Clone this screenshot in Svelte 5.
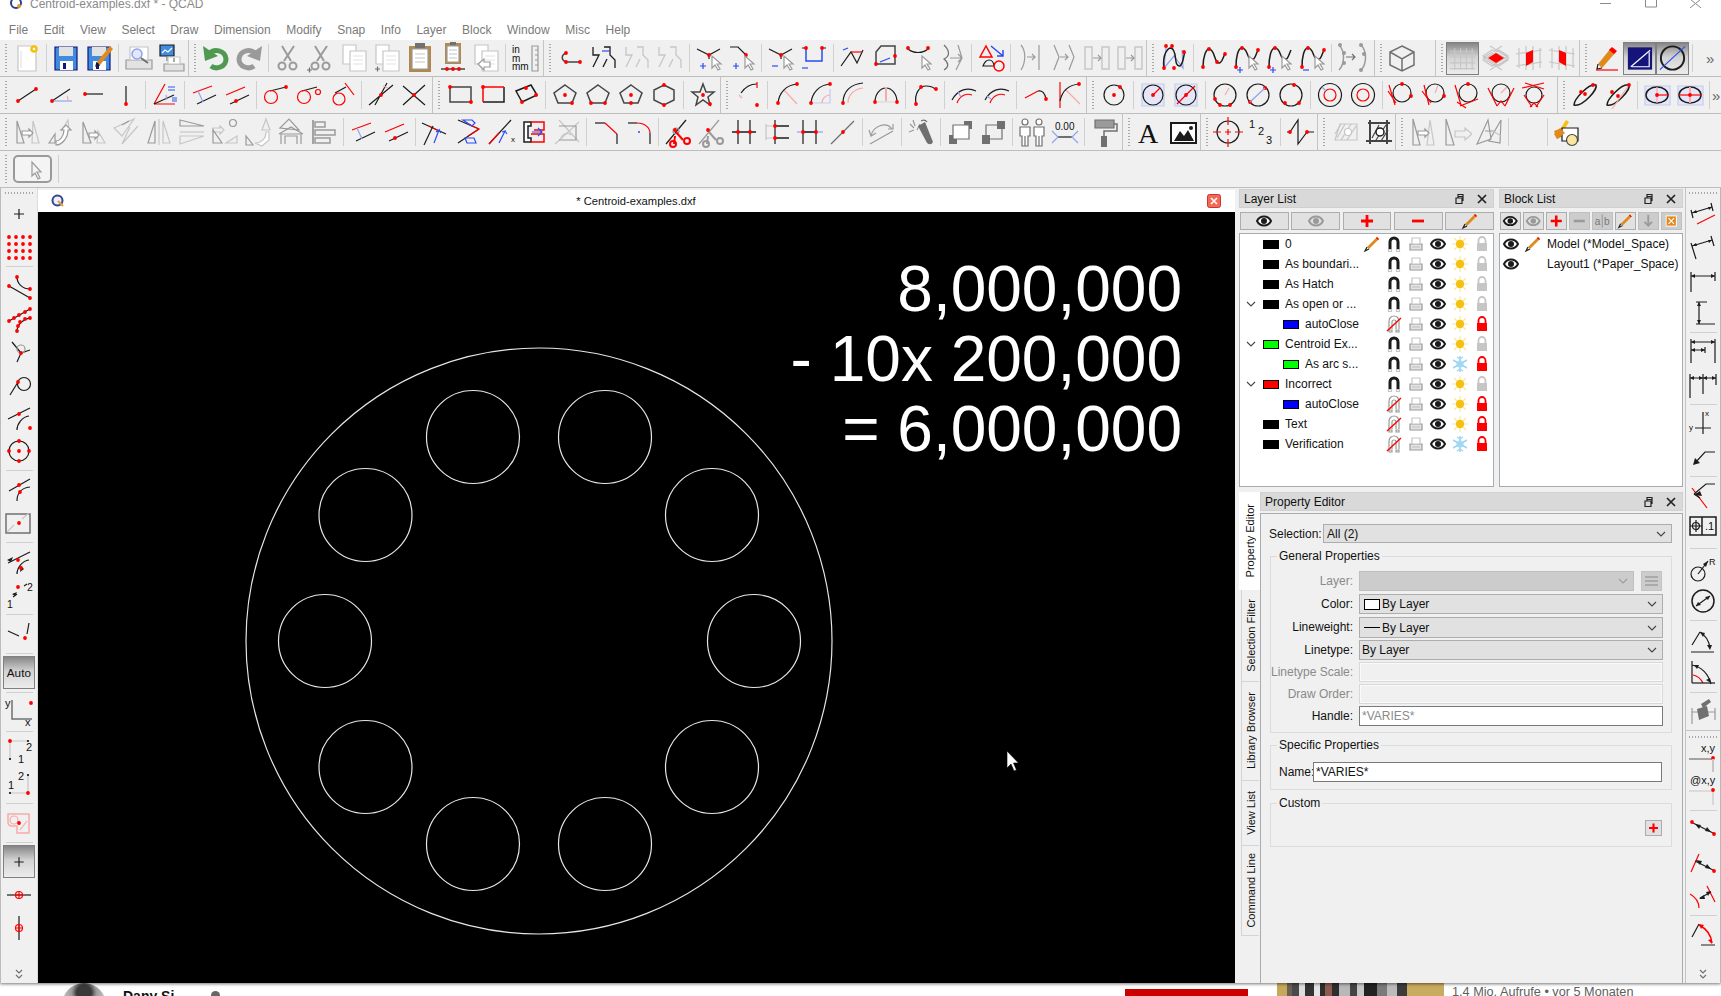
<script>
  const C = { k:'#1c1c1c', K:'#444', r:'#f00', R:'#e55', b:'#2a4cf0', B:'#8ea4ee', g:'#9a9a9a', G:'#707070', l:'#c6c6c6', p:'#f6aaaa', w:'#fff', n:'none', y:'#f6c10e', Y:'#fbe6a0', o:'#e08a1e', d:'#14147a', s:'#e2e2e2', t:'#b08850', e:'#4f9a50', F:'#3f8be0', i:'#e4e7f8', h:'#c3ccf0', c:'#9bd6f2', m:'#d8d8d8' };
  const cache = new Map();
  function P(src) {
    if (cache.has(src)) return cache.get(src);
    const out = src.split(';').filter(Boolean).map((part) => {
      const i = part.indexOf(':');
      const h = part.slice(0, i), b = part.slice(i + 1);
      if (h === '.' || h === ',') {
        const n = b.trim().split(/\s+/).map(Number), pts = [];
        for (let j = 0; j < n.length; j += 2) pts.push([n[j], n[j + 1]]);
        return { t: 'dots', pts, fill: h === '.' ? '#f00' : '#111', r: h === '.' ? 1.9 : 1.1 };
      }
      if (h === 'T' || h === 'U' || h === 'V') {
        const a = b.split(' ');
        return { t: 'text', x: a[0], y: a[1], size: a[2], text: a.slice(3).join(' '), fill: h === 'U' ? '#777' : '#111', fam: h === 'V' ? 'Liberation Serif' : 'Liberation Sans' };
      }
      const m = h.match(/^([a-zA-Z])([a-zA-Z])?([\d.]+)?$/);
      const d = b.replace(/O(-?[\d.]+) (-?[\d.]+) ([\d.]+)/g, (_, x, y, r) => `M${x - r} ${y}a${r} ${r} 0 1 0 ${2 * r} 0a${r} ${r} 0 1 0 ${-2 * r} 0`);
      return { t: 'path', d, stroke: C[m[1]], fill: m[2] ? C[m[2]] : 'none', w: m[3] || 1.2 };
    });
    cache.set(src, out);
    return out;
  }

  const cur = 'gw:M19 14V26L22 23L25 28L27 27L24 22L28 22z;';
  const floppy = 'dF1.2:M5 5h22v23H5z;ns:M9 5h14v9H9z;nw:M10 19h13v9H10z;nd:M13 21h3v6h-3z;';
  const scis = 'g2:M22 4L12 19M10 4L19 19;g2:O10 24 3.5;g2:O21 24 3.5;';
  const copy = 'lw:M5 3h13v19H5z;lw:M12 9h16v20H12z;s:M15 14h10M15 18h10M15 22h10;';
  const par1 = 'r:M5 14L24 7;k:M9 25L28 16;B:M10 12L15 23';
  const par2 = 'r:M5 16L24 8;k:M9 25L28 16;.:15 22';
  const sShape = (c) => `${c}1.3:M5 5V13H11L5 25M16 5H22V13L27 18V26M19 17L15 25;`;

  const row1 = [
    { w: 189, items: ['lw:M7 4h18v25H7z;y2.5:O23 7 2.5;s:M10 9V26', '|', floppy, floppy + 'no:M14 20L27 4l3 3L17 23z;k:M14 20l-1 4 4-1', '|',
      'gs:M4 18h26v9H4z;lw:M8 5h18v13H8z;Bi1.5:O15 12 5;G2:M19 16l7 5', 'kF:M5 3h14v11H5z;w:M7 11l3-3 3 2 4-4;G:M12 14V19;gs:M9 22h20v7H9z;lw:M13 15h12v7H13z;G:M19 16v4'] },
    { w: 355, items: ['e5:M9 12C14 6 25 8 26 17C26 25 16 28 11 24;ne:M3 4L5 19L18 14z', 'g5:M23 12C18 6 7 8 6 17C6 25 16 28 21 24;ng:M29 4L27 19L14 14z', '|',
      scis, scis + 'G:M2 28h5M4.5 25.5v5', copy, copy + 'G:M4 27h5M6.5 24.5v5',
      'nt:M5 4h22v26H5z;gw:M8 7h16v20H8z;nG:M11 1h10v5H11z;l:M11 12h10M11 16h10M11 20h10', 'nt:M8 1h16v21H8z;gw:M10 4h12v16H10z;nG:M13 0h6v3h-6z;l:M12 8h8M12 12h8M12 16h8;k:M4 27H28;.:10 27 16 27 22 27',
      copy + 'gw:M8 22l6-5v3h6v5h-6v3z', '|', 'T:3 11 10 in;T:3 20 10 m;T:3 28 10 mm;g:M23 4h6v25h-6z;g:M26 8h3M26 13h3M26 18h3M26 23h3'] },
    { w: 603, items: ['K1.5:M11 11C6 13 6 18 11 20H25;.:11 11 11 20 25 20', sShape('k') + 'b:M14 9H22', sShape('l'), sShape('l'), '|',
      'k:M4 7L16 13L27 7M16 13V17;.:16 13;b:M7 24H13M10 21V27;' + cur, 'k:M4 5H12L20 13;.:20 13;b:M7 24H13M10 21V27;' + cur, '|',
      'k:M4 7L16 13L27 7M16 13V17;.:16 13;b:M7 24H13;' + cur, 'k:M4 6H8M24 6H28;b1.5:M8 6V19H24V6;.:8 6 24 6;b:M4 26H10', '|',
      'k:M4 24L14 10L20 21L26 8;r:M14 10H25;b:M6 8l5-2', 'K1.5:M6 10L11 4H25V22H6z;.:6 22 25 14;b:M10 20L20 16', 'k:M4 6C10 12 20 12 26 6;.:5 6 25 6;' + cur, 'G:M8 3C14 9 14 14 8 17C13 21 13 25 8 28;g:M14 16H26M22 12l4 4-4 4M22 3L26 16L20 28', '|',
      'r1.5:M5 15L11 4L17 15z;b1.5:M16 4L28 14M22 14h6V8;k:M8 24C11 16 18 16 19 24z;r1.5:O24 24 5', '|',
      'g:M7 3C12 9 12 20 7 28;g:M13 15H21M18 12l3 3-3 3;g:M25 3V28', 'g:M7 3L12 15L7 28;g:M13 15H21M18 12l3 3-3 3;g:M22 3L27 15L22 28', 'l1.5:M5 5h7v22H5z;l1.5:M22 5h7v22H22z;g:M13 16H21M18 13l3 3-3 3', 'l1.5:M5 5h7v22H5z;l1.5:M22 5h7v22H22z;g:M13 16H21M18 13l3 3-3 3'] },
    { w: 228, items: ['B:M8 6L6 26L16 14L25 26L24 8;k1.5:M6 26C4 12 10 6 13 6C20 8 15 25 22 24C26 20 25 14 27 10;.:8 4 14 4 6 26 16 26 26 10', '|',
      'k1.5:M6 25C6 15 9 7 12 7C18 7 17 21 22 21C25 21 26 15 28 12;.:6 25 12 7 20 20 28 12', 'k1.5:M6 25C6 15 8 6 12 6C18 6 17 18 22 18C25 18 26 12 28 8;.:6 25 12 6 22 18 28 8;b:M7 28H13M10 25V31;' + cur, 'k1.5:M6 25C6 15 8 6 12 6C18 6 17 18 22 18C25 18 26 12 28 8;.:6 25 12 6 22 18;b:M7 28H13M10 25V31;' + cur, 'k1.5:M6 25C6 15 8 6 12 6C18 6 17 18 22 18C25 18 26 12 28 8;.:6 25 12 6 22 18 28 8;b:M7 28H13;' + cur, '|',
      'g1.5:M4 3C10 9 10 22 4 28;g1.5:M26 3C32 9 32 22 26 28;G:M11 15H20M17 12l3 3-3 3;ng:O5 3 2;ng:O9 11 2;ng:O9 21 2;ng:O26 3 2;ng:O29 12 2;ng:O26 28 2'] },
    { w: 61, items: ['G1.5:M16 4L28 10V23L16 29L4 23V10zM4 10L16 17L28 10M16 17V29'] },
    { w: 144, items: ['!l:M8 6V28M14 6V28M20 6V28M26 6V28M3 9H29M3 15H29M3 21H29M3 27H29', 'l:M3 14L12 8L28 18L19 24zM3 18L12 24L28 14L19 8zM10 4L29 16M22 4L3 16M10 28L29 16M22 28L3 16;nr:M16 11L24 16L16 21L8 16z', 'l:M6 6V26M13 4V28M20 4V28M27 6V26M3 12L29 8M3 24L29 20;nr:M13 11L20 8V20L13 24z', 'l:M6 6V26M13 4V28M20 4V28M27 6V26M3 8L29 12M3 20L29 24;nr:M13 8L20 11V24L13 20z'] },
    { items: ['no:M7 22L20 6l5 4L11 26z;nr:M18 8l3-3 5 4-3 3z;k:M7 22l-1 5 5-1;r:M5 28H27', '!nd:M4 5h25v23H4z;w:M7 25L27 8;w:M8 25H26V10', '!k2:O16 16 12;b:M3 28L29 4', '|', '>>'] }
  ];
  const row2 = [
    { w: 433, items: ['k:M7 22L25 10;.:7 22 25 10', 'k:M8 22L26 10;B:M8 22H28;p:M23 17a6 6 0 0 1 1 5;.:8 22', 'k:M8 15H26;.:8 15', 'k:M16 7V25;.:16 25', '|',
      'r:M5 25L16 5M5 25H26;k:M5 25L25 16;B:M17 21a8 8 0 0 0 0-5;nB:M19 7h7v2h-7zM19 10h7v2h-7zM23 18h5v5h-5z', '|', par1, par2, '|',
      'k:M10 12L26 8;r1.2:O11 18 6.5;.:26 8', 'k:M9 12L24 8;r1.2:O11 18 6.5;r:O25 13 2.5', 'k:M9 14L20 8;r1.2:O13 20 6;r:M19 4L28 16', '|',
      'k:M4 26L28 6M10 26L22 4;p:M18 7l5 2;.:16 16', 'k:M5 26L27 6M5 7L27 26;.:16 16'] },
    { w: 288, items: ['K1.5:M6 8H27V23H6z;.:6 8 27 23', 'k1.5:M27 8V23H6;r1.5:M6 23V8H27;.:6 8', 'k1.5:M12 23L6 12L21 6L27 16z;.:16 9 12 23 26 16', '|',
      'K1.5:M16 6L27 14L23 24H9L5 14z;.:16 16 23 24', 'K1.5:M16 6L27 14L23 24H9L5 14z;.:9 24 23 24', 'K1.5:M16 6L27 14L23 24H9L5 14z;.:16 16 16 24', 'K1.5:M16 6L26 11V21L16 26L6 21V11z;.:16 6 16 26', '|',
      'K1.5:M16 5l3 8h8l-6 5 2 8-7-5-7 5 2-8-6-5h8z;.:16 16 23 25'] },
    { w: 366, items: ['k:M9 14C13 8 19 5 25 5;r:M25 3V9;p:M7 16L10 19;.:25 26', '|',
      'p:M13 11L26 25;k:M7 24C8 14 15 6 26 5;.:7 24 26 5', 'h:M7 24H26V10;p:M18 24a8 8 0 0 1 8-8;k:M7 24C8 14 15 6 26 5;.:7 24 26 5', 'k:M6 24C6 12 14 5 26 4;p:M11 24C11 15 18 10 26 9;.:6 24', 'k:M5 23A11 14 0 0 1 27 23;p2:M16 8V22;m:M7 23H25;.:5 23 27 23', '|',
      'k:M7 25C5 14 11 7 17 7C21 7 24 8 26 10;.:7 25 12 8 27 10', '|',
      'k:M4 21C10 10 20 8 28 12;r:M9 24C12 16 19 14 24 16;B:M10 13l3 5', 'k:M4 21C10 10 20 8 28 12;r:M9 24C12 16 19 14 24 16;B:M6 17l4 3', '|',
      'r:M5 19L18 12;k:M18 12C22 11 25 14 26 20;.:26 20', 'r:M7 3V29;p:M12 10L27 25;k:M7 22C9 12 16 6 26 5;.:26 5'] },
    { w: 471, items: ['k:O16 16 10;.:16 16 22 8', '|',
      'hi:M5 5h22v22H5z;k:O16 16 10;r:M16 16L23 9;.:16 16', 'hi:M5 5h22v22H5z;k:O16 16 10;r:M7 25L25 7;.:16 16', '|',
      'k:O16 16 11;.:6 20 11 26 21 26;p:M16 16L20 9', 'k:O16 16 11;.:23 9 8 23;B:M8 23L23 9', 'k:O16 16 11;.:19 6 10 24 24 24', '|',
      'k:O16 16 11.5;r:O16 16 6;B:M8 8l4 4', 'k:O16 16 11.5;r:O16 16 6', '|',
      'k:O16 14 9;r:M3 6L9 26M2 12L10 24;.:16 5 25 17', 'k:O16 14 9;r:M5 6L10 26M3 12L12 24;p:M16 14L19 6;.:25 17', 'k:O16 14 9;r:M3 6L9 26M5 23L14 29M8 27L26 20;.:16 5', 'k:O16 14 9;r:M3 9L12 27M29 9L20 27M12 27L16 22L20 27;p:M16 14L22 8', 'k:O16 16 8;r:M4 9L26 4M7 4L26 10M6 16L14 28M26 16L18 28M12 28L16 24L20 28'] },
    { items: ['k1.5:M5 26C5 20 20 4 27 6C29 10 14 28 5 26z;.:24 6 12 13 16 15', 'k1.5:M5 26C5 20 20 4 27 6C29 10 14 28 5 26z;p:M10 30L27 6;.:27 6 10 13 16 17', '|',
      'hi:M4 7h25v19H4z;k1.5:M5 16a11 8 0 1 0 22 0a11 8 0 1 0 -22 0;r:M16 16H28;p:M16 8V24;.:16 16', 'hi:M4 7h25v19H4z;k1.5:M5 16a11 8 0 1 0 22 0a11 8 0 1 0 -22 0;r:M5 16H28;p2:M16 8V24;.:16 16', '|', '>>'] }
  ];
  const m1 = 'g:M6 5V27H13z;l:M22 5L28 27H21z;gw:M11 15h7v-2l4 4-4 4v-2h-7z';
  const row3 = [
    { w: 1123, items: [m1, 'g:M5 27L11 18V27z;l:M24 4L18 14H25z;gw:M12 25C16 25 20 20 20 14h-3l5-5 5 5h-3C24 22 18 29 12 29z', 'g:M6 6V27H14z;l:M21 15L28 27H20z;gw:M12 17h6v-2l4 4-4 4v-2h-6z', 'l:M4 12L24 3L12 20zM28 10L12 28L20 11;g:M12 9L19 5', 'g:M5 27L12 5V27z;l:M20 5L27 27H20z;l:M16 3V29', 'g:M4 4L28 10H4z;l:M4 28L28 20H4z;l:M4 16H28', 'l:M4 12h7v-2l4 4-4 4v-2H4z;g:O24 7 3.5;g:M4 14V27H13z;l:M28 20V27H17z', 'g:M4 20V29H11z;l:M24 3L20 14H28z;lw:M13 27C19 27 24 23 24 16h3v8L20 30z', 'g:M6 28V18H26V28M4 18L16 11L28 18M10 28V20H22V28;g:M5 12L14 3L24 14z', 'G:M5 4V28;g1.5:M7 6h10v5H7zM7 14h20v5H7zM7 22h15v5H7z', '|', par1, par2, '|',
      'k:M3 7L27 18;r:M10 10L20 15;k:M5 29L14 10;b:M15 27L20 14l-3 2M20 14l2 3', 'k:M6 4L27 13M6 27L27 13;r:M16 20L27 13L16 8;b:M11 4H20l3 3-3 3zM13 22H22l2 5H15z', 'k:M4 28L26 4;r:M4 28L14 17;b:M14 27L20 15l-3 1M20 15l2 3;T:26 26 8 x', 'kw1.5:M13 6H6V26H13V22H10V10H13z;r1.5:M13 6H26V14H16M13 18H26V26H13;b:M14 16H24M20 12l4 4-4 4', 'l:M4 28L28 6M8 4L28 26;g:M8 10h17v14H8;l:M10 24a6 6 0 0 1 10-5', '|',
      'k:M5 7H15;r:M15 7L27 18;k:M27 18V28', 'k:M5 7H14;r:M14 7C22 7 27 12 27 17;k:M27 17V28;nb:O16 16 1', '|',
      'k:M4 28L24 4;g:O14 15 3;r2:M14 16L21 24M13 20L12 28;r2:O25 25 3;r2:O11 28 3;.:13 14', 'g:M4 28L24 4;g2:M14 16L21 24M13 20L12 28;g2:O25 25 3;g2:O11 28 3;.:13 14', 'k:M10 4V28M22 4V28;k1.5:M4 16H28;.:10 16 22 16', 'k:M14 4V28;k1.5:M14 10H28M14 22H28;l:M5 10H14M5 22H14M5 8V24;.:14 10 14 22', 'B:M3 16H29;k:M9 4V28M22 4V28;k1.5:M9 16H22;.:9 16 22 16', 'G:M4 28L27 5;.:16 16', '|',
      'g:M4 28L27 15;g:M5 20C7 10 20 5 26 13M3 14l2 6 5-3M22 13h5v-5', '|', 'g:M5 8l4 4M4 16l5-2M8 4l2 6M15 8l-3 6;nG:M13 10L20 6L28 26Q26 30 22 27z;G:M16 5Q20 3 22 6', '|',
      'nG:M5 19h8v9H5z;nG:M20 5h8v8h-8z;Gw:M9 9h16v14H9z', 'nG:M5 19h8v9H5z;nG:M20 5h8v8h-8z;G:M9 9h16v14H9z', '|',
      'Gw:O9 6 3;Gw:M4 11h10v9h-2V30H6V20H4z;G:M9 20V30;Gw:O23 6 3;Gw:M18 11h10v9h-2V30H20V20h-2z;G:M23 20V30', 'T:6 14 10 0.00;K1.5:M9 21H23;B:M3 15L9 21L3 27M29 15L23 21L29 27', '|',
      'Gg:M7 4h19v8H7z;G1.5:M26 8h3V15H16V20;nG:M13 20h6v11h-6z'] },
    { w: 78, items: ['V:4 27 28 A', 'kw2:M4 7h25v20H4z;nk:M7 25L13 15L17 20L21 14L27 25z;nk:O24 12 2'] },
    { w: 117, items: ['k:O16 16 11;r:M1 16H9M13 16H19M23 16H31M16 1V9M16 13V19M16 23V31', 'T:4 12 11 1;T:13 19 11 2;T:21 28 11 3', '|', 'k:M3 16H6M6 16L14 4L14 28L23 16H30;.:6 16 23 16'] },
    { w: 78, items: ['l:M6 24L11 8H28V24z;l:M8 22L16 8M12 24L22 8M18 24L27 10M6 18L12 8;nw:O19 16 3.5;l:O19 16 3.5', 'K2:M6 7H28M4 25H30M8 4V28M25 4V28;K:M10 22L17 9M14 24L24 9M19 25L26 14;kw1.5:O18 16 4'] },
    { items: ['g:M6 3V29H13z;l:M23 4L27 29H20z;gw:M11 15h7v-2l4 4-4 4v-2h-7z', 'g:M6 3V29H14z;l:M15 15H25V12L32 18L25 24V21H15z', 'g:M4 28L15 4L18 23zM16 25L28 4L27 27zM12 15H22;l:M20 15L28 20', '|', 'n:M0 0', '|',
      'ny:M15 4l3 2-5 8-3-2z;no:M3 15l8-3 5 6-10 5z;kw:M11 12h16v13H11z;KY:O21 24 5.5;no:M3 18l6-6 5 5-8 6z'] }
  ];

  const left = ['k:M11 16H21M16 11V21',
    '.:6 6 13 6 20 6 27 6 6 13 13 13 20 13 27 13 6 20 13 20 20 20 27 20 6 27 13 27 20 27 27 27', '|',
    'k:M6 16L27 28;k:M14 7C14 14 20 19 27 19;.:6 16 27 28 14 7 27 19',
    'k:M6 18L27 6M14 28C14 22 20 16 27 15;.:6 18 11 15 16 12 22 9 27 6 14 28 15 23 17 19 22 16 27 15',
    'k:M9 6L18 17L27 14M18 17L14 26;g:O18 13 4;.:18 17',
    'k:M7 26L15 13;k:O21 15 6.5;.:15 13',
    'k:M5 17L27 6M14 28C14 22 19 15 26 14;.:16 12 27 26',
    'k:O16 16 10;.:16 16 16 6 16 26 6 16 26 16', '|',
    'k:M6 17L27 5M14 27C14 20 18 14 27 13;.:16 11 17 18',
    'G1.5:M3 7H27V26H3z;l:M4 25L11 18M19 12L26 6;.:16 16', '|',
    'k:M5 17L27 6M14 28C14 22 19 15 26 14;nk:M4 14l6-3-2 5zM17 26l1-6 3 3z;.:15 14 18 22',
    'T:4 29 10.5 1;T:24 12 10.5 2;k:M10 18L14 15M21 7L24 5;.:15 8;nk:M9 15l5-2-2 4z', '|',
    'k:M5 13L16 18M26 5L24 16;.:22 20', '|',
    '!T:3 20 12.5 Auto', '|',
    'T:2 11 11 y;T:22 30 11 x;G1.5:M9 4V23H29;.:28 7', '|',
    'T:15 28 11 1;T:23 16 11 2;l:M7 6H25M7 6V24;.:7 6;,:7 24 25 6',
    'T:5 21 11 1;T:15 12 11 2;l:M7 25H25M25 7V25;.:25 25;,:7 25 25 7', '|',
    'p1.5:M5 7H26V26H14V19H9C6 19 5 17 5 15z;p:O11 13 4;p:M17 23L24 14;.:16 16', '|',
    '!k:M11 16H21M16 11V21',
    'k:M4 16H28;r:O16 16 3.5;r:M16 12V20M12 16H20',
    'k:M16 4V28;r:O16 16 3.5;r:M16 12V20M12 16H20'];
  const dimH = 'k:M4 12H28M4 8V28M28 8V17;nk:M4 12l4-2v4zM28 12l-4-2v4z';
  const right1 = ['k:M5 14L25 8M4 11L6 19M24 4L26 12;r:M10 25L28 16;nk:M5 14l4-3 1 3zM25 8l-4 0 1 3z',
    'k:M5 14L25 8M4 11L9 27M24 4L27 14;nk:M5 14l4-3 1 3zM25 8l-4 0 1 3z', dimH, 'k:M9 5H20M9 27H28M12 5V27;nk:M12 5l-2 4h4zM12 27l-2-4h4z', '|',
    'k:M4 6H28M4 14H18M4 3V27M28 3V27M18 11V17;nk:M4 6l4-2v4zM28 6l-4-2v4zM4 14l4-2v4zM18 14l-4-2v4z', 'k:M3 9H29M3 5V29M16 5V25M29 5V16;nk:M3 9l4-2v4zM16 9l4-2v4zM16 9l-4-2v4zM29 9l-4-2v4z', '|',
    'T:18 8 8 x;T:2 22 8 y;k:M16 4V26M8 20H24', 'k:M8 22L18 11H28;nk:M6 24l2-7 5 5z', '|',
    'r:M5 8L20 28;k:M7 14L19 4H28M13 18l-6-4;nk:M7 15l6-4 2 5z',
    'k1.5:M3 4H29V22H3zM15 4V22;T:18 17 11 .1;k1.2:O9 13 3.5;k:M9 7V19M3 13H15', '|',
    'k:O11 22 7;k:M11 22L21 9;nk:M21 9l-5 3 3 3z;T:22 13 9 R', 'k1.5:O16 16 11;k:M9 21L23 11;nk:M9 21l2-4 3 3zM23 11l-2 4-3-3z', '|',
    'k:M4 28H27M5 21L13 8M13 8C18 11 22 17 23 24;nk:M13 8l5 1-2 4zM23 26l-3-5h5z', 'k:M5 4V26M5 8C14 10 21 16 24 27;r:M6 18C11 19 14 22 16 26;k:M5 26H28;nk:M7 8l5 0-2 4zM24 26l-5-3 4-2z', '|',
    'g:M5 12V28M28 12V24M5 16H28;nG:M14 8L22 3L24 6L16 12zM10 13L20 10L22 20L12 24z'];
  const right2 = ['T:14 10 11 x,y;G:M2 17H26;.:26 16;l2:M26 17V30', 'T:3 9 11 @x,y;l:M2 16H26M26 16V30;.:26 15', '|',
    'k:M4 8L28 20;nk:M8 10l6 1-2 4zM24 18l-6-1 2-4z;.:5 8 27 20', 'r:M4 25L12 7;k:M8 14L28 24;nk:M9 13l6 1-2 4zM24 22l-6-1 2-4z;.:27 24', 'r:M3 14C10 18 12 22 12 28M20 6L28 22;k:M13 18L24 12;nk:M12 19l5-4 1 4zM24 11l-5 1 2 4z', '|',
    'K:M14 26H28;k:M5 18L12 5;r1.5:M12 6C20 10 24 16 25 24;nr:M12 5l5 1-3 4zM25 25l-4-4 4-1z'];
  const tabs = ['Property Editor', 'Selection Filter', 'Library Browser', 'View List', 'Command Line'];
  const eye = 'kw2:M3 10C6 4 14 4 17 10C14 16 6 16 3 10z;nk:O10 10 3';
  const eyeOff = 'gs2:M3 10C6 4 14 4 17 10C14 16 6 16 3 10z;ng:O10 10 3';
  const pencil = 'no:M5 13L15 3l2 2L7 15z;nr:M14 4l1-1 2 2-1 1z;k:M5 13l-2 4 4-2';
  const plus = 'r2.8:M10 4V16M4 10H16';
  const minus = 'r2.8:M4 10H16';
  const magnet = 'k3:M6 15V8a4 4 0 0 1 8 0V15;l:M4.5 15.5h3v2h-3zM12.5 15.5h3v2h-3z';
  const noMagnet = 'g:M5 15V7a5 5 0 0 1 10 0V15M8 15V8a2 2 0 0 1 4 0V15;g:M5 16h3v2H5zM12 16h3v2h-3z;r1.4:M3 17L17 4';
  const printer = 'gs:M4 10h12v6H4z;lw:M6 4h8v6H6z;l:M6 13h8';
  const sun = 'Y1.2:M10 2V18M2 10H18M4 4L16 16M4 16L16 4;ny:O10 10 4.2';
  const snow = 'c1.6:M10 2V18M3 6L17 14M3 14L17 6;c:O10 10 3;c:M7 3l3 2 3-2M7 17l3-2 3 2';
  const lock = (c) => `${c}1.8:M6.5 9V6.5a3.5 3.5 0 0 1 7 0V9;n${c}:M5 9h10v8H5z`;
  const layers = [
    { n: '0', c: '#000', pen: 1 }, { n: 'As boundari...', c: '#000' }, { n: 'As Hatch', c: '#000' }, { n: 'As open or ...', c: '#000', chev: 1 },
    { n: 'autoClose', c: '#00f', sub: 1, off: 1, red: 1 }, { n: 'Centroid Ex...', c: '#0f0', chev: 1 }, { n: 'As arc s...', c: '#0f0', sub: 1, frz: 1, red: 1 },
    { n: 'Incorrect', c: '#f00', chev: 1 }, { n: 'autoClose', c: '#00f', sub: 1, off: 1, red: 1 }, { n: 'Text', c: '#000', off: 1, red: 1 }, { n: 'Verification', c: '#000', off: 1, frz: 1, red: 1 }
  ];
  const blockBtns = [[eye, 0], [eyeOff, 0], [plus, 0], ['g2.8:M4 10H16', 1], ['U:2 14 11 a;g:M10 3V17;U:12 14 11 b', 1], [pencil, 0], ['g2:M10 3V15;g2:M6 11l4 4 4-4;l:M7 3h6', 1], ['nw:M4 4h12v12H4z;no:M5 5h10v10H5z;w:M7 7l6 6M13 7l-6 6', 1]];
  const holes = [[473, 437], [605, 437], [712, 515], [754, 641], [712, 767], [605, 844], [473, 844], [365.5, 767], [325, 641], [365.5, 515]];
  const bigText = [['8,000,000', 311], ['- 10x 200,000', 381], ['= 6,000,000', 451]];
</script>

{#snippet ic(src, size = 32)}
  <svg class="ic" width={size} height={size} viewBox="0 0 {size} {size}">
    {#each P(src) as s}
      {#if s.t === 'path'}
        <path d={s.d} stroke={s.stroke} fill={s.fill} stroke-width={s.w}></path>
      {:else if s.t === 'dots'}
        {#each s.pts as p}<circle cx={p[0]} cy={p[1]} r={s.r} fill={s.fill}></circle>{/each}
      {:else}
        <text x={s.x} y={s.y} font-size={s.size} fill={s.fill} font-family={s.fam}>{s.text}</text>
      {/if}
    {/each}
  </svg>
{/snippet}

{#snippet hbar(row)}
  <div class="row">
    {#each row as tb}
      <div class="tb" class:grow={!tb.w} style:width={tb.w ? tb.w + 'px' : null}>
        <i class="handle"></i>
        {#each tb.items as it}
          {#if it === '|'}<i class="sep"></i>
          {:else if it === '>>'}<span class="more">»</span>
          {:else}<span class="tool" class:on={it[0] === '!'}>{@render ic(it[0] === '!' ? it.slice(1) : it)}</span>{/if}
        {/each}
      </div>
    {/each}
  </div>
{/snippet}

{#snippet vlist(list)}
  {#each list as it}
    {#if it === '|'}<i class="vsep"></i>
    {:else}<span class="vtool" class:on={it[0] === '!'}>{@render ic(it[0] === '!' ? it.slice(1) : it)}</span>{/if}
  {/each}
{/snippet}

{#snippet dockTitle(text)}
  <div class="dtitle">
    <span>{text}</span>
    <svg class="dbtns" width="34" height="12" viewBox="0 0 34 12"><path d="M3 3.5h5v-2h-5zM1 5h6v5.5H1zM3 2v3M7 3.5h1v4H7" fill="none" stroke="#222" stroke-width="1.2"></path><path d="M23 2l8 8M31 2l-8 8" stroke="#222" stroke-width="1.7"></path></svg>
  </div>
{/snippet}

{#snippet chev()}
  <svg class="chev" width="10" height="6" viewBox="0 0 10 6"><path d="M1 1l4 4 4-4" fill="none" stroke="#444" stroke-width="1.1"></path></svg>
{/snippet}

<div class="page">
  <div class="appwin">
    <div class="titlebar">
      <svg class="appicon" width="14" height="12" viewBox="0 0 14 12"><circle cx="6" cy="3" r="5" fill="#fff" stroke="#2c3f8c" stroke-width="2"></circle><circle cx="9" cy="6" r="2" fill="#e0a030"></circle></svg>
      <span class="apptitle">Centroid-examples.dxf * - QCAD</span>
      <svg class="winctl" width="101" height="8" viewBox="0 0 101 8"><path d="M0 3.5H11M45.500-2h11v9h-11zM90-1l11 9M101-1l-11 9" fill="none" stroke="#8a8a8a" stroke-width="1"></path></svg>
    </div>
    <div class="menubar">
      {#each ['File', 'Edit', 'View', 'Select', 'Draw', 'Dimension', 'Modify', 'Snap', 'Info', 'Layer', 'Block', 'Window', 'Misc', 'Help'] as m}<span>{m}</span>{/each}
    </div>
    {@render hbar(row1)}
    {@render hbar(row2)}
    {@render hbar(row3)}
    <div class="row">
      <div class="tb grow">
        <i class="handle"></i>
        <span class="pick">{@render ic('g:M12 6V20L15 17L18 23L20 22L17 16L21 16z', 26)}</span>
        <i class="sep2"></i>
      </div>
    </div>

    <div class="main">
      <aside class="lbar">
        <i class="vhandle"></i>
        {@render vlist(left)}
        <span class="vmore">{@render ic('G:M13 10l3 3 3-3M13 15l3 3 3-3')}</span>
      </aside>

      <section class="doc">
        <header class="doctitle">
          <svg class="docicon" width="14" height="14" viewBox="0 0 14 14"><circle cx="6.500" cy="6.500" r="5" fill="#eef" stroke="#34468f" stroke-width="2"></circle><path d="M7 7l5 5" stroke="#e0a030" stroke-width="2"></path></svg>
          <span class="docname">* Centroid-examples.dxf</span>
          <svg class="docclose" width="14" height="14" viewBox="0 0 14 14"><rect x=".5" y=".5" width="13" height="13" rx="2" fill="#f26a55" stroke="#c33"></rect><path d="M4 4l6 6M10 4l-6 6" stroke="#fff" stroke-width="1.6"></path></svg>
        </header>
        <svg class="canvas" viewBox="38 212 1197 771" width="1197" height="771">
          <rect x="38" y="212" width="1197" height="771" fill="#000"></rect>
          <circle cx="539" cy="641" r="293" fill="none" stroke="#e6e6e6" stroke-width="1.2"></circle>
          {#each holes as h}<circle cx={h[0]} cy={h[1]} r="46.500" fill="none" stroke="#e6e6e6" stroke-width="1.2"></circle>{/each}
          {#each bigText as t}<text x="1182" y={t[1]} text-anchor="end" font-family="Liberation Sans" font-size="64" fill="#fff">{t[0]}</text>{/each}
          <path d="M1007 751v17l4-4 3 7 2.500-1-3-7h5z" fill="#fff" stroke="#000" stroke-width=".6"></path>
        </svg>
      </section>

      <section class="dock">
        <div class="dtop">
          <div class="dcol layercol">
            {@render dockTitle('Layer List')}
            <div class="lbtns">
              {#each [eye, eyeOff, plus, minus, pencil] as b}<span class="lbtn">{@render ic(b, 20)}</span>{/each}
            </div>
            <div class="listbox">
              {#each layers as l}
                <div class="lrow">
                  <span class="lchev">{#if l.chev}{@render chev()}{/if}</span>
                  <span class="lname" class:sub={l.sub}><i class="swatch" style:background={l.c}></i>{l.n}</span>
                  <span class="lic">{#if l.pen}{@render ic(pencil, 20)}{/if}</span>
                  <span class="lic">{@render ic(l.off ? noMagnet : magnet, 20)}</span>
                  <span class="lic">{@render ic(printer, 20)}</span>
                  <span class="lic">{@render ic(eye, 20)}</span>
                  <span class="lic">{@render ic(l.frz ? snow : sun, 20)}</span>
                  <span class="lic">{@render ic(lock(l.red ? 'r' : 'l'), 20)}</span>
                </div>
              {/each}
            </div>
          </div>
          <div class="dcol blockcol">
            {@render dockTitle('Block List')}
            <div class="bbtns">
              {#each blockBtns as b}<span class="bbtn" class:dis={b[1]}>{@render ic(b[0], 20)}</span>{/each}
            </div>
            <div class="listbox">
              <div class="brow"><span class="lic">{@render ic(eye, 20)}</span><span class="lic">{@render ic(pencil, 20)}</span><span>Model (*Model_Space)</span></div>
              <div class="brow"><span class="lic">{@render ic(eye, 20)}</span><span class="lic"></span><span>Layout1 (*Paper_Space)</span></div>
            </div>
          </div>
        </div>
        <div class="dbot">
          <div class="tabs">
            {#each tabs as t, i}<span class="tab tab{i}" class:active={i === 0}><span>{t}</span></span>{/each}
          </div>
          <div class="dcol propcol">
            {@render dockTitle('Property Editor')}
            <div class="panel">
              <div class="selrow">
                <label for="sel">Selection:</label>
                <div id="sel" class="combo">All (2){@render chev()}</div>
              </div>
              <fieldset class="general">
                <legend>General Properties</legend>
                <div class="form">
                  <span class="lab dim">Layer:</span>
                  <div class="layerctl"><div class="combo disabled">{@render chev()}</div><span class="listbtn"><i></i><i></i><i></i></span></div>
                  <span class="lab">Color:</span>
                  <div class="combo"><i class="colorbox"></i>By Layer{@render chev()}</div>
                  <span class="lab">Lineweight:</span>
                  <div class="combo tall"><i class="lwline"></i>By Layer{@render chev()}</div>
                  <span class="lab">Linetype:</span>
                  <div class="combo">By Layer{@render chev()}</div>
                  <span class="lab dim">Linetype Scale:</span>
                  <div class="field off"></div>
                  <span class="lab dim">Draw Order:</span>
                  <div class="field off"></div>
                  <span class="lab">Handle:</span>
                  <div class="field gray">*VARIES*</div>
                </div>
              </fieldset>
              <fieldset class="specific">
                <legend>Specific Properties</legend>
                <div class="namerow"><span>Name:</span><div class="field">*VARIES*</div></div>
              </fieldset>
              <fieldset class="custom">
                <legend>Custom</legend>
                <div class="customrow"><span class="addbtn">{@render ic(plus, 20)}</span></div>
              </fieldset>
            </div>
          </div>
        </div>
      </section>

      <aside class="rbar">
        <i class="vhandle rtop"></i>
        <div class="rtb1">{@render vlist(right1)}</div>
        <i class="rbound"></i>
        <i class="vhandle short"></i>
        {@render vlist(right2)}
        <span class="vmore">{@render ic('G:M13 10l3 3 3-3M13 15l3 3 3-3')}</span>
      </aside>
    </div>
  </div>

  <footer class="below">
    <span class="avatar"></span>
    <b class="uploader">Dany Si</b>
    <i class="verified"></i>
    <span class="subscribe"></span>
    <span class="thumb"></span>
    <span class="views">1,4 Mio. Aufrufe • vor 5 Monaten</span>
  </footer>
</div>

<style>
  :global(body) { margin: 0; background: #fff; }
  .page { width: 1721px; height: 996px; overflow: hidden; display: flex; flex-direction: column; font: 12px "Liberation Sans", Arial, sans-serif; color: #111; background: #fff; }
  .appwin { height: 983px; flex: none; display: flex; flex-direction: column; box-shadow: 0 1px 3px rgba(0,0,0,.55); position: relative; box-sizing: border-box; }
  .ic { display: block; overflow: hidden; }
  i { display: block; }

  .titlebar { height: 21px; flex: none; display: flex; overflow: hidden; background: #fff; }
  .appicon { margin: 0 6px 0 10px; }
  .apptitle { line-height: 8px; font-size: 12px; color: #8a8a8a; }
  .winctl { margin: 0 20px 0 auto; }
  .menubar { height: 19px; flex: none; display: flex; align-items: center; padding: 0 0 1px 1px; box-sizing: border-box; background: #fff; color: #7a7a7a; }
  .menubar span { padding: 0 7.800px; }

  .row { height: 36px; flex: none; display: flex; background: #f0f0f0; border-bottom: 1px solid #bdbdbd; }
  .tb { height: 100%; box-sizing: border-box; display: flex; align-items: center; border-right: 1px solid #c4c4c4; flex: none; }
  .tb.grow { flex: 1; border-right: 0; }
  .handle { width: 2px; height: 28px; margin: 0 3px 0 5px; flex: none; background: repeating-linear-gradient(#a8a8a8 0 1px, transparent 1px 3px); }
  .tool { width: 33px; height: 33px; flex: none; display: flex; align-items: center; justify-content: center; box-sizing: border-box; }
  .on { background: linear-gradient(#858585, #d2d2d2 45%, #ececec); border: 1px solid #808080; box-sizing: border-box; }
  .sep { width: 1px; height: 28px; margin: 0 2.500px; flex: none; background: #d0d0d0; }
  .more { margin-left: auto; padding-right: 3px; width: 12px; color: #666; font-size: 15px; flex: none; }
  .pick { width: 39px; height: 28px; margin-left: 3px; flex: none; display: flex; align-items: center; justify-content: center; border: 2px solid #9a9a9a; border-radius: 5px; box-sizing: border-box; background: #f4f4f4; }
  .sep2 { width: 1px; height: 28px; margin-left: 6px; background: #d0d0d0; }

  .main { flex: 1; min-height: 0; display: flex; background: #f0f0f0; }
  .lbar { width: 38px; flex: none; display: flex; flex-direction: column; align-items: center; border-right: 1px solid #dcdcdc; border-left: 1px solid #bbb; box-sizing: border-box; }
  .rbar { width: 36px; flex: none; display: flex; flex-direction: column; align-items: center; border-left: 1px solid #c4c4c4; border-right: 1px solid #b8b8b8; box-sizing: border-box; }
  .vhandle { width: 28px; height: 2px; flex: none; margin: 4px 0 3px; background: repeating-linear-gradient(90deg, #a8a8a8 0 1px, transparent 1px 3px); }
  .vhandle.rtop { margin-bottom: 5px; }
  .vhandle.short { margin: 5px 0 3px; }
  .vtool { width: 32px; height: 33px; flex: none; display: flex; align-items: center; justify-content: center; box-sizing: border-box; }
  .vsep { width: 27px; height: 1px; margin: 2.500px 0; flex: none; background: #d0d0d0; }
  .vmore { margin-top: auto; height: 14px; display: flex; align-items: center; }
  .rtb1 { height: 531px; flex: none; display: flex; flex-direction: column; align-items: center; }
  .rtb1 .vtool { height: 32.500px; }
  .rtb1 .vsep { margin: 3px 0; }
  .rbound { width: 100%; height: 1px; flex: none; background: #c4c4c4; }

  .doc { width: 1197px; flex: none; display: flex; flex-direction: column; padding-top: 2px; box-sizing: border-box; }
  .doctitle { height: 22px; flex: none; background: #fff; display: flex; align-items: center; }
  .docicon { margin-left: 13px; }
  .docname { flex: 1; text-align: center; font-size: 11.200px; }
  .docclose { margin-right: 14px; }
  .canvas { display: block; flex: none; background: #000; }

  .dock { width: 450px; flex: none; box-sizing: border-box; padding: 1px 2px 0 4px; display: flex; flex-direction: column; gap: 5px; }
  .dtop { height: 298px; flex: none; display: flex; gap: 5px; }
  .dcol { display: flex; flex-direction: column; min-width: 0; }
  .layercol { width: 255px; }
  .blockcol { width: 184px; }
  .dtitle { height: 19px; flex: none; display: flex; align-items: center; justify-content: space-between; background: #d9d9d9; padding: 1px 0 0 4px; border: 1px solid #d0d0d0; box-sizing: border-box; }
  .dbtns { margin: -1px 4px 0 0; }
  .lbtns { display: flex; gap: 2.500px; margin: 4px 0 3px 1px; }
  .lbtn { flex: 1; height: 18px; display: flex; align-items: center; justify-content: center; background: #e1e1e1; border: 1px solid #adadad; box-sizing: border-box; }
  .bbtns { display: flex; justify-content: space-between; margin: 4px 1px 3px 1px; }
  .bbtn { width: 20.500px; height: 18px; display: flex; align-items: center; justify-content: center; background: #e1e1e1; border: 1px solid #adadad; box-sizing: border-box; }
  .bbtn.dis { background: #ccc; border-color: #bfbfbf; }
  .listbox { flex: 1; min-height: 0; background: #fff; border: 1px solid #a5acb2; box-sizing: border-box; }
  .lrow { height: 20px; display: grid; grid-template-columns: 23px 1fr repeat(6, 22px); align-items: center; }
  .lchev { display: flex; justify-content: center; padding-right: 2px; }
  .chev { display: block; }
  .lname { display: flex; align-items: center; gap: 6px; white-space: nowrap; }
  .lname.sub { padding-left: 20px; }
  .swatch { width: 16px; height: 9px; flex: none; box-sizing: border-box; border: 1px solid #000; }
  .lic { display: flex; align-items: center; justify-content: center; width: 22px; }
  .brow { height: 20px; display: flex; align-items: center; }
  .brow > span:last-child { margin-left: 3px; white-space: nowrap; }

  .dbot { flex: 1; min-height: 0; display: flex; }
  .tabs { width: 21px; flex: none; display: flex; flex-direction: column; align-items: flex-end; }
  .tab { width: 18px; margin-right: 1px; display: flex; align-items: center; justify-content: center; background: #f0f0f0; border: 1px solid #d4d4d4; border-right: 0; border-top: 0; box-sizing: border-box; font-size: 11px; }
  .tab > span { writing-mode: vertical-rl; transform: rotate(180deg); white-space: nowrap; }
  .tab.active { width: 21px; margin-right: 0; background: #fff; height: 98px; border: 0; }
  .tab1 { height: 92px; } .tab2 { height: 99px; } .tab3 { height: 65px; } .tab4 { height: 90px; }
  .propcol { flex: 1; }
  .panel { flex: 1; min-height: 0; margin-top: 2px; padding: 10px 10px 0 9px; border: 1px solid #a5acb2; border-bottom: 0; box-sizing: border-box; }
  .selrow { display: flex; align-items: center; height: 19px; gap: 8px; margin-left: -1px; }
  .selrow label { width: 46px; }
  .combo { flex: 1; height: 20px; display: flex; align-items: center; padding-left: 2px; background: #e1e1e1; border: 1px solid #adadad; box-sizing: border-box; min-width: 0; }
  .selrow .combo { height: 19px; padding-left: 3px; }
  .combo .chev { margin: 0 5px 0 auto; }
  .combo.tall { height: 21px; }
  .combo.disabled { background: #ccc; border-color: #bfbfbf; }
  .combo.disabled .chev { opacity: .35; }
  fieldset { margin: 0; padding: 0; min-width: 0; border: 1px solid #dcdcdc; box-sizing: border-box; }
  legend { margin-left: 6px; padding: 0 2px; line-height: 13px; }
  .general { margin-top: 7px; padding: 8px 9px 6px 0; }
  .form { display: grid; grid-template-columns: 82px 304px; column-gap: 6px; grid-template-rows: 23px 23px 23px 22px 22px 22px 20px; align-items: start; }
  .lab { line-height: 20px; text-align: right; white-space: nowrap; }
  .dim { color: #8a8a8a; }
  .layerctl { display: flex; gap: 7px; padding-right: 1px; }
  .listbtn { width: 21px; height: 20px; flex: none; display: flex; flex-direction: column; justify-content: center; gap: 2px; padding: 0 3px; background: #ccc; border: 1px solid #c4c4c4; box-sizing: border-box; }
  .listbtn i { height: 2px; background: #aaa; }
  .colorbox { width: 14px; height: 9px; margin: 0 2px; flex: none; background: #fff; border: 1px solid #000; }
  .lwline { width: 16px; height: 1px; margin: 0 2px; flex: none; background: #000; }
  .field { height: 20px; flex: 1; box-sizing: border-box; display: flex; align-items: center; padding-left: 2px; background: #fff; border: 1px solid #7a7a7a; }
  .field.off { background: #f0f0f0; border-color: #d8d8d8; box-shadow: inset 0 0 0 1px #fafafa; }
  .field.gray { color: #8a8a8a; }
  .specific { margin-top: 6px; padding: 10px 9px 7px 0; }
  .namerow { display: flex; align-items: center; gap: 4px; padding-left: 8px; }
  .namerow > span { width: 30px; flex: none; }
  .custom { margin-top: 7px; height: 50px; padding: 10px 9px 0 0; }
  .customrow { display: flex; justify-content: flex-end; }
  .addbtn { width: 17px; height: 16px; display: flex; align-items: center; justify-content: center; overflow: hidden; background: #e1e1e1; border: 1px solid #adadad; box-sizing: border-box; }

  .below { flex: 1; min-height: 0; display: flex; overflow: hidden; align-items: flex-start; }
  .avatar { width: 44px; height: 44px; flex: none; margin-left: 62px; border-radius: 50%; background: radial-gradient(circle at 50% 22%, #3a3a3a 0 18%, #9a9a9a 30%, #d8d8d8 62%); }
  .uploader { width: 88px; flex: none; margin: 5px 0 0 17px; font: 700 14px "Liberation Sans", sans-serif; color: #111; }
  .verified { width: 9px; height: 9px; flex: none; margin-top: 8px; border-radius: 50%; background: #666; }
  .subscribe { width: 123px; height: 10px; flex: none; margin: 6px 0 0 905px; background: #cc0000; }
  .thumb { width: 167px; height: 14px; flex: none; margin-left: 29px; background: linear-gradient(90deg, #c6a85c 0 6%, #6b6256 6% 9%, #4a4a4a 9% 13%, #ddd 13% 17%, #333 17% 22%, #e4e4e4 22% 26%, #2e2e2e 26% 29%, #8d5a50 29% 33%, #2e2e2e 33% 37%, #b8b8b8 37% 44%, #444 44% 48%, #c8c8c8 48% 52%, #222 52% 60%, #7a7a7a 60% 66%, #bbb 66% 72%, #3c3c3c 72% 78%, #c9ab60 78% 100%); }
  .views { margin: 1px 0 0 8px; font-size: 12.700px; line-height: 16px; color: #606060; white-space: nowrap; }
</style>
